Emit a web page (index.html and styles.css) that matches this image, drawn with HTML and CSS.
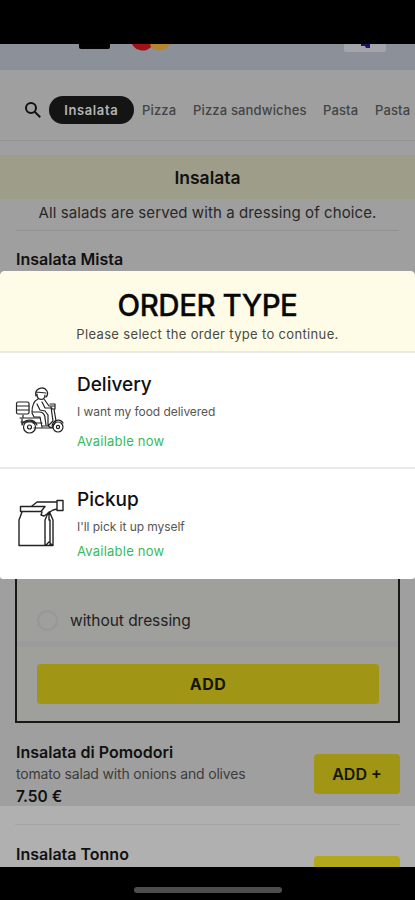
FILE: index.html
```html
<!DOCTYPE html>
<html lang="en">
<head>
<meta charset="utf-8">
<meta name="viewport" content="width=device-width, initial-scale=1">
<title>Order type</title>
<link rel="stylesheet" href="styles.css">
</head>
<body>
<div class="phone">
  <div class="statusbar"></div>
  <main class="page">
    <div class="payments">
      <svg width="415" height="26" viewBox="0 0 415 26">
        <path d="M79 0h31v3q0 2-2 2H81q-2 0-2-2z" fill="#020202"/>
        <path d="M132 0c4 8.500 17 8.500 20 1V0z" fill="#a01218"/>
        <path d="M150 0c2 8.500 16 8.500 20 0z" fill="#b5842e"/>
        <path d="M344 0h42v6q0 2-2 2h-38q-2 0-2-2z" fill="#a4a5aa"/>
        <path d="M361 0h9v4h-4l-1-2h-4z" fill="#171466"/>
      </svg>
    </div>
    <nav class="tabs">
      <svg class="search" width="18" height="18" viewBox="0 0 18 18" fill="none" stroke="#111" stroke-width="2"><circle cx="7" cy="7" r="5"/><path d="M10.700 10.700l5.500 5.500"/></svg>
      <span class="tab active">Insalata</span>
      <span class="tab t-pizza">Pizza</span>
      <span class="tab t-sand">Pizza sandwiches</span>
      <span class="tab t-pasta">Pasta</span>
      <span class="tab t-last">Pasta</span>
    </nav>
    <h2 class="category">Insalata</h2>
    <p class="note">All salads are served with a dressing of choice.</p>
    <section class="mista">
      <h3 class="name">Insalata Mista</h3>
      <div class="options">
        <label class="option"><i class="radio"></i><span>without dressing</span></label>
        <div class="divider"></div>
        <div class="add wide">ADD</div>
      </div>
    </section>
    <section class="item">
      <div class="details">
        <h3 class="name">Insalata di Pomodori</h3>
        <p class="desc">tomato salad with onions and olives</p>
        <p class="price">7.50 €</p>
      </div>
      <div class="add">ADD +</div>
    </section>
    <section class="next">
      <div class="next-row">
        <h3 class="name">Insalata Tonno</h3>
        <div class="add"></div>
      </div>
    </section>
  </main>
  <div class="homebar"><i></i></div>

  <div class="sheet">
    <header class="sheet-head">
      <h1>ORDER TYPE</h1>
      <p>Please select the order type to continue.</p>
    </header>
    <div class="choice delivery">
      <svg width="50" height="50" viewBox="0 0 50 50" fill="none" stroke="#222" stroke-width="1.200" stroke-linejoin="round" stroke-linecap="round">
        <rect x="1.500" y="16" width="12.500" height="12" rx="1.500"/><path d="M2 20h12M2 24h12M8 29v3M5 32h20M7 33v5M6 36h13"/>
        <path d="M21 10c-2-7 7-11 11-5 1 2 1 4-1 6M21 6l10 1M22 8c0 7 8 7 8 1M23 13c-4 2-6 7-6 13h8c3 0 5 3 5 6l1 7M29 13l5 7h5M27 16l3 6h7M22 18l3 6 5 1 3 4v10M17 27l2 4h6l2 10M27 40h6l5-5-2-14M35 18h5v5h-3M39 23l2 12M33 40l4 2 4-7M18 37h9M19 42h19"/>
        <circle cx="14.500" cy="41" r="6"/><circle cx="14.500" cy="41" r="2"/><path d="M7 39c2-6 12-7 15 0M37 40c1-6 8-8 11-3"/>
        <circle cx="43" cy="41" r="5"/><circle cx="43" cy="41" r="1.600"/>
      </svg>
      <div class="choice-text">
        <h2>Delivery</h2>
        <p class="about">I want my food delivered</p>
        <p class="status">Available now</p>
      </div>
    </div>
    <div class="choice pickup">
      <svg width="50" height="50" viewBox="0 0 50 50" fill="none" stroke="#222" stroke-width="1.400" stroke-linejoin="round" stroke-linecap="round">
        <path d="M5.500 7.500H30l-4 5H5.500zM7 13l-3 8v25.500h34V21l-3.500-8M30 46.500V21l3-7M35 21v25M34 13v8M31 46l3-3 3 3"/>
        <path d="M17 7l5-4h20v7l-4 1-9 6-3-1 1-3M42 1.500h6v10h-6z"/>
      </svg>
      <div class="choice-text">
        <h2>Pickup</h2>
        <p class="about">I'll pick it up myself</p>
        <p class="status">Available now</p>
      </div>
    </div>
  </div>
</div>
</body>
</html>
```
FILE: styles.css
```css
* { box-sizing: border-box; margin: 0; padding: 0; }
body { background: #000; font-family: Inter, "Liberation Sans", sans-serif; color: #111; }
.phone { position: relative; width: 415px; height: 900px; overflow: hidden; display: flex; flex-direction: column; }
.statusbar { height: 44px; flex: none; background: #000; }
.page { height: 823px; flex: none; overflow: hidden; background: #9f9f9f; }
.payments { height: 26px; background: #8c9099; }
.payments svg { display: block; }
.tabs { height: 71px; padding: 9px 0 0 24px; border-bottom: 1px solid #929292; display: flex; align-items: center; font-size: 13px; font-weight: 500; letter-spacing: 0.15px; color: #444; white-space: nowrap; overflow: hidden; }
.search { flex: none; margin-right: 7px; }
.tab { flex: none; }
.active { width: 84.500px; height: 28px; line-height: 28px; border-radius: 14px; background: #141414; color: #b4b4b4; text-align: center; font-weight: 600; letter-spacing: 0.6px; }
.t-pizza { margin-left: 8.500px; width: 51px; }
.t-sand { width: 130px; }
.t-pasta { width: 52px; }
.category { margin-top: 14px; height: 44px; line-height: 45px; background: #9d9d8a; text-align: center; font-size: 17.500px; font-weight: 600; }
.note { height: 32px; margin: 0 16px; line-height: 27px; border-bottom: 1px solid #929292; text-align: center; font-size: 15px; letter-spacing: 0.1px; color: #282828; white-space: nowrap; }
.name { font-size: 16px; line-height: 22px; font-weight: 600; padding-left: 1px; white-space: nowrap; }
.mista { padding: 17px 15px 0; height: 492px; display: flex; flex-direction: column; }
.options { flex: 1; margin-top: 12px; border: 2px solid #181b15; background: #9f9f9b; padding: 0 19px 17px 20px; display: flex; flex-direction: column; justify-content: flex-end; }
.option { display: flex; align-items: center; height: 46px; font-size: 15.500px; letter-spacing: -0.05px; color: #222; }
.radio { width: 21px; height: 21px; border: 2px solid #979799; border-radius: 50%; margin-right: 12px; }
.divider { height: 6px; margin: -2px -19px 17px -20px; background: #9b9b9b; }
.add { width: 86px; height: 40px; flex: none; background: #a09514; border-radius: 4px; text-align: center; line-height: 40px; font-size: 16px; font-weight: 600; color: #15150a; }
.add.wide { width: 342px; font-weight: 700; letter-spacing: 0.5px; }
.item { height: 83px; padding: 18px 15px 0; display: flex; justify-content: space-between; }
.item .add { margin-top: 13px; }
.desc { font-size: 14px; line-height: 22px; padding-left: 1px; letter-spacing: -0.17px; color: #3c3c3c; white-space: nowrap; }
.price { font-size: 15.500px; line-height: 23px; padding-left: 1px; font-weight: 600; }
.next { height: 61px; padding: 18px 15px 0; background: #b0b0b0; }
.next-row { border-top: 1px solid #a5a5a5; padding-top: 18px; display: flex; justify-content: space-between; }
.next .add { margin-top: 13px; background: #b3a71b; }
.homebar { flex: 1; display: flex; justify-content: center; padding-top: 20px; }
.homebar i { width: 148px; height: 6px; border-radius: 3px; background: #4d4d4d; }

.sheet { position: absolute; left: 0; top: 271px; width: 415px; height: 308px; background: #fff; border-radius: 5px 5px 3px 3px; overflow: hidden; white-space: nowrap; }
.sheet-head { height: 82px; background: #fefce7; border-bottom: 2px solid #e8e8e8; text-align: center; padding-top: 15px; }
.sheet-head h1 { font-size: 29.500px; line-height: 38px; font-weight: 500; letter-spacing: -0.5px; -webkit-text-stroke: 0.3px #080808; color: #080808; }
.sheet-head p { font-size: 13px; line-height: 20px; letter-spacing: 0.34px; color: #4a4a44; }
.choice { display: flex; padding-left: 15px; }
.choice svg { flex: none; margin-right: 12px; }
.delivery { height: 116px; border-bottom: 2px solid #e9e9e9; padding-top: 17px; }
.delivery svg { margin-top: 16px; }
.pickup { padding-top: 16px; }
.pickup svg { margin-top: 14px; }
.choice h2 { font-size: 19px; line-height: 30px; font-weight: 500; color: #101010; }
.about { font-size: 12px; line-height: 18px; margin-top: 3px; letter-spacing: -0.05px; color: #555; }
.status { font-size: 13px; line-height: 20px; margin-top: 10px; letter-spacing: 0.23px; color: #39b95e; }
.pickup .status { margin-top: 5px; }
```
